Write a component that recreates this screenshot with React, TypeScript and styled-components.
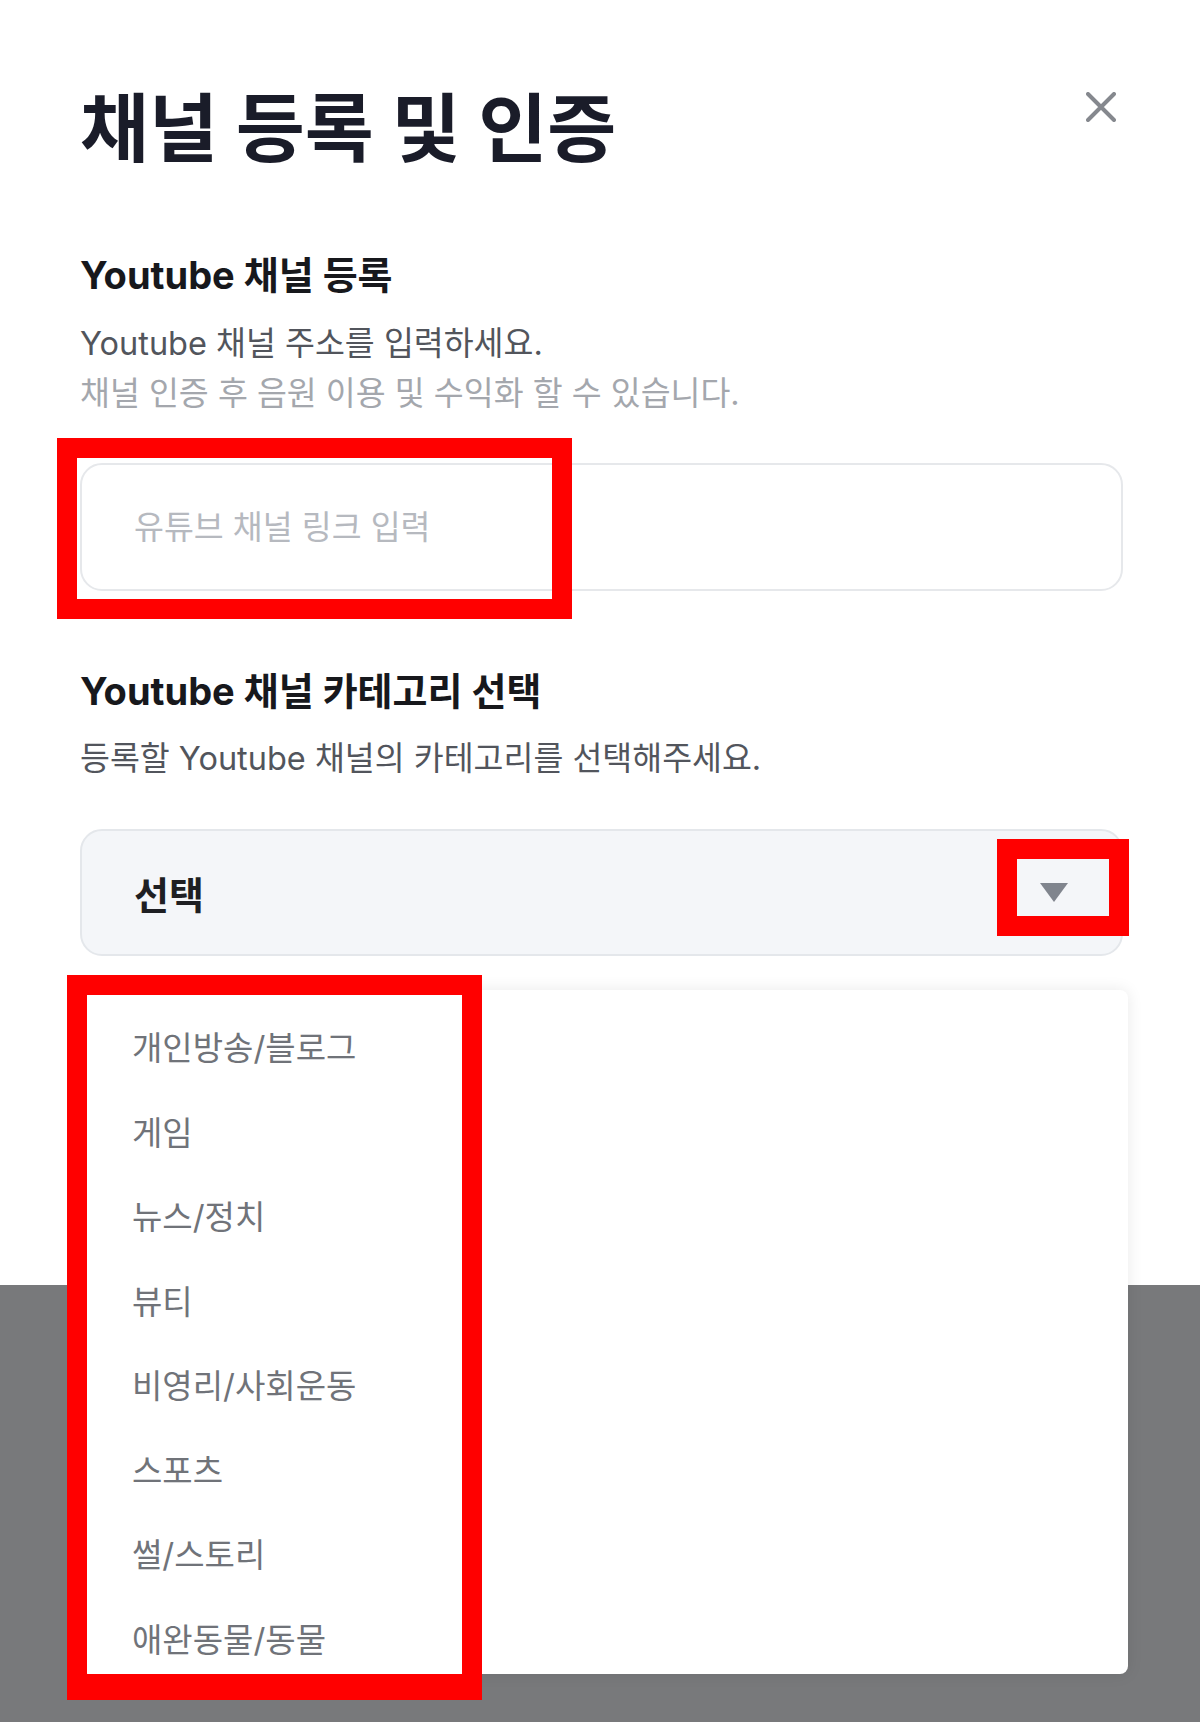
import styled, { createGlobalStyle } from 'styled-components';

const GlobalStyle = createGlobalStyle`
  html, body {
    margin: 0;
    padding: 0;
  }
  body {
    font-family: Inter, 'Noto Sans CJK KR', sans-serif;
    background: #78797b;
  }
  * {
    box-sizing: border-box;
  }
`;

const Page = styled.div`
  width: 1200px;
  min-height: 1722px;
  background: #78797b;
  overflow: hidden;
`;

const Sheet = styled.section`
  display: flex;
  flex-direction: column;
  height: 1285px;
  padding: 84px 77px 0 80px;
  background: #ffffff;
`;

const Header = styled.header`
  display: flex;
  justify-content: space-between;
  align-items: flex-start;
`;

const Title = styled.h1`
  margin: 0;
  color: #1a1c29;
  font-size: 75px;
  font-weight: 700;
  line-height: 90px;
`;

const CloseButton = styled.button`
  display: flex;
  width: 30px;
  height: 30px;
  margin: 8px 7px 0 0;
  padding: 0;
  border: 0;
  background: none;
  color: #85888e;
  cursor: pointer;
`;

const SectionTitle = styled.h2<{ $gap: number }>`
  margin: ${props => props.$gap}px 0 0;
  color: #17181c;
  font-size: 38px;
  font-weight: 700;
  line-height: 44px;
`;

const DescBlock = styled.div<{ $gap: number }>`
  margin-top: ${props => props.$gap}px;
`;

const Description = styled.p<{ $muted?: boolean }>`
  margin: 0;
  color: ${props => (props.$muted ? '#a4a7ad' : '#52555c')};
  font-size: 32.5px;
  line-height: 50px;
`;

const Field = styled.div`
  position: relative;
  margin-top: 44px;
`;

const LinkInput = styled.input`
  display: block;
  width: 100%;
  height: 128px;
  padding: 0 52px;
  border: 2px solid #e6e8eb;
  border-radius: 22px;
  background: #ffffff;
  color: #1e1f23;
  font-family: Inter, 'Noto Sans CJK KR', sans-serif;
  font-size: 32.5px;
  outline: none;
  &::placeholder {
    color: #b6b9bf;
  }
`;

const SelectWrap = styled.div`
  position: relative;
  margin-top: 45px;
`;

const SelectButton = styled.button`
  position: relative;
  display: flex;
  justify-content: space-between;
  align-items: center;
  width: 100%;
  height: 127px;
  padding: 0 53px 0 52px;
  border: 2px solid #e4e7eb;
  border-radius: 22px;
  background: #f4f6f9;
  color: #1e1f23;
  font-family: Inter, 'Noto Sans CJK KR', sans-serif;
  font-size: 38px;
  font-weight: 700;
  cursor: pointer;
`;

const Caret = styled.span`
  width: 0;
  height: 0;
  border-left: 14px solid transparent;
  border-right: 14px solid transparent;
  border-top: 19px solid #80858e;
`;

const MenuLayer = styled.div`
  position: absolute;
  top: calc(100% + 34px);
  left: 0;
  right: -5px;
  z-index: 5;
`;

const Menu = styled.ul`
  height: 684px;
  margin: 0;
  padding: 14px 0 0;
  list-style: none;
  overflow: hidden;
  background: #ffffff;
  border-radius: 8px;
  box-shadow: 0 0 16px rgba(0, 0, 0, 0.09);
`;

const MenuItem = styled.li`
  display: flex;
  align-items: center;
  height: 84.5px;
  padding-left: 52px;
  color: #707379;
  font-size: 33px;
  cursor: pointer;
`;

// red highlight frames drawn over the screenshot
const Highlight = styled.span<{ $top: number; $left?: number; $right?: number; $w: number; $h: number; $bottom?: number }>`
  position: absolute;
  top: ${props => props.$top}px;
  ${props => (props.$right !== undefined ? `right: ${props.$right}px;` : `left: ${props.$left}px;`)}
  width: ${props => props.$w}px;
  height: ${props => props.$h}px;
  border: 20px solid #ff0000;
  border-bottom-width: ${props => props.$bottom ?? 20}px;
  pointer-events: none;
  z-index: 6;
`;

const categories = [
  '개인방송/블로그',
  '게임',
  '뉴스/정치',
  '뷰티',
  '비영리/사회운동',
  '스포츠',
  '썰/스토리',
  '애완동물/동물',
];

const CloseIcon = () => (
  <svg width="30" height="30" viewBox="0 0 30 30" fill="none">
    <path d="M2 2L28 28M28 2L2 28" stroke="currentColor" strokeWidth="4" strokeLinecap="round" />
  </svg>
);

const App = () => {
  return (
    <Page>
      <GlobalStyle />
      <Sheet>
        <Header>
          <Title>채널 등록 및 인증</Title>
          <CloseButton aria-label="닫기">
            <CloseIcon />
          </CloseButton>
        </Header>

        <SectionTitle $gap={79}>Youtube 채널 등록</SectionTitle>
        <DescBlock $gap={22}>
          <Description>Youtube 채널 주소를 입력하세요.</Description>
          <Description $muted>채널 인증 후 음원 이용 및 수익화 할 수 있습니다.</Description>
        </DescBlock>
        <Field>
          <LinkInput placeholder="유튜브 채널 링크 입력" />
          <Highlight $top={-25} $left={-23} $w={515} $h={181} />
        </Field>

        <SectionTitle $gap={78}>Youtube 채널 카테고리 선택</SectionTitle>
        <DescBlock $gap={21}>
          <Description>등록할 Youtube 채널의 카테고리를 선택해주세요.</Description>
        </DescBlock>
        <SelectWrap>
          <SelectButton>
            <span>선택</span>
            <Caret />
            <Highlight $top={8} $right={-8} $w={132} $h={97} />
          </SelectButton>
          <MenuLayer>
            <Menu>
              {categories.map(item => (
                <MenuItem key={item}>{item}</MenuItem>
              ))}
            </Menu>
            <Highlight $top={-15} $left={-13} $w={415} $h={725} $bottom={26} />
          </MenuLayer>
        </SelectWrap>
      </Sheet>
    </Page>
  );
};

export default App;
